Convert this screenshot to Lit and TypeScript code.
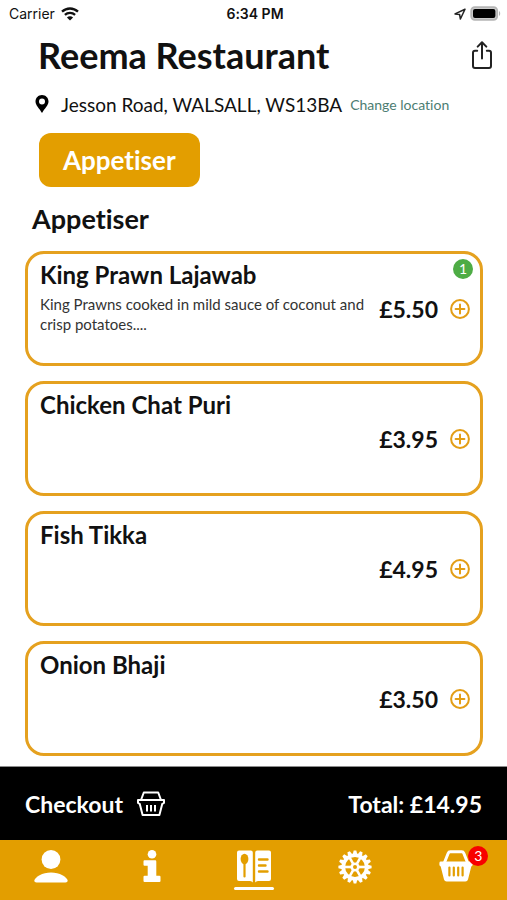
import { LitElement, html, css, svg, nothing } from "lit";
import { customElement, property } from "lit/decorators.js";

interface Dish {
  name: string;
  price: string;
  description?: string;
  count?: number;
}

const dishes: Dish[] = [
  {
    name: "King Prawn Lajawab",
    price: "£5.50",
    description: "King Prawns cooked in mild sauce of coconut and crisp potatoes....",
    count: 1,
  },
  { name: "Chicken Chat Puri", price: "£3.95" },
  { name: "Fish Tikka", price: "£4.95" },
  { name: "Onion Bhaji", price: "£3.50" },
];

const gearTeeth = Array.from({ length: 16 }, (_, i) => i * 22.5);
const gearSpokes = [30, 90, 150, 210, 270, 330];

@customElement("dish-card")
export class DishCard extends LitElement {
  @property({ attribute: false }) dish!: Dish;

  static styles = css`
    :host {
      display: block;
    }
    .card {
      position: relative;
      box-sizing: border-box;
      min-height: 115px;
      display: flex;
      align-items: center;
      border: 3px solid #e5a11f;
      border-radius: 19px;
      padding: 7px 10px 7px 12px;
      background: #fff;
    }
    .info {
      flex: 1;
      align-self: stretch;
      min-width: 0;
    }
    .name {
      margin: 0;
      font-size: 24px;
      line-height: 28px;
      font-weight: 700;
    }
    .description {
      margin: 5px 0 0;
      font-size: 15px;
      line-height: 20px;
      color: #333;
    }
    .price {
      margin: 0 12px;
      font-size: 23px;
      line-height: 28px;
      font-weight: 700;
    }
    .add {
      border: 0;
      padding: 0;
      background: none;
      width: 20px;
      height: 20px;
      cursor: pointer;
    }
    .add svg {
      display: block;
    }
    .count {
      position: absolute;
      top: 5px;
      right: 7px;
      width: 20px;
      height: 20px;
      border-radius: 50%;
      background: #4eac45;
      color: #fff;
      font-size: 14px;
      line-height: 20px;
      text-align: center;
    }
  `;

  render() {
    const { name, price, description, count } = this.dish;
    return html`
      <article class="card">
        <div class="info">
          <h3 class="name">${name}</h3>
          ${description ? html`<p class="description">${description}</p>` : nothing}
        </div>
        <span class="price">${price}</span>
        <button class="add" aria-label="Add ${name}">
          <svg width="20" height="20" viewBox="0 0 20 20" fill="none" stroke="#e39e16" stroke-width="2">
            <circle cx="10" cy="10" r="8.9" />
            <path d="M10 5.6v8.8M5.6 10h8.8" stroke-linecap="round" />
          </svg>
        </button>
        ${count ? html`<span class="count">${count}</span>` : nothing}
      </article>
    `;
  }
}

@customElement("app-root")
export class AppRoot extends LitElement {
  static styles = css`
    :host {
      display: flex;
      flex-direction: column;
      min-height: 100vh;
      background: #fff;
      color: #111;
      font-family: Lato, "Liberation Sans", sans-serif;
      font-variant-ligatures: none;
    }
    svg {
      display: block;
      flex: none;
    }
    button {
      font: inherit;
      font-variant-ligatures: none;
      color: inherit;
      border: 0;
      padding: 0;
      background: none;
      cursor: pointer;
    }
    .status {
      display: grid;
      grid-template-columns: 1fr auto 1fr;
      align-items: center;
      height: 27px;
      padding: 0 6px 0 9px;
      font-family: Inter, sans-serif;
      font-size: 14px;
    }
    .carrier,
    .power {
      display: flex;
      align-items: center;
      gap: 6px;
    }
    .power {
      justify-content: flex-end;
      gap: 4px;
    }
    .time {
      font-weight: 600;
    }
    .header {
      display: flex;
      align-items: center;
      justify-content: space-between;
      height: 56px;
      padding: 0 14px 0 38px;
    }
    .title {
      margin: 0;
      font-size: 36px;
      line-height: 40px;
      font-weight: 700;
    }
    .address {
      display: flex;
      align-items: center;
      height: 42px;
      padding: 0 35px;
      font-size: 19px;
      white-space: nowrap;
    }
    .place {
      margin: 0 8px 0 12px;
    }
    .change {
      color: #4c7d72;
      font-size: 14px;
      text-decoration: none;
    }
    .filters {
      padding: 8px 39px 0;
    }
    .filter {
      height: 54px;
      padding: 0 24px;
      border-radius: 12px;
      background: #e39e00;
      color: #fff;
      font-size: 26px;
      font-weight: 700;
    }
    .section {
      margin: 0;
      padding: 16px 32px;
      font-size: 27px;
      line-height: 32px;
      font-weight: 700;
    }
    .dishes {
      display: flex;
      flex-direction: column;
      gap: 15px;
      padding: 0 24px 10px 25px;
    }
    .bottom {
      position: sticky;
      bottom: 0;
      margin-top: auto;
    }
    .checkout {
      display: flex;
      align-items: center;
      justify-content: space-between;
      height: 73px;
      padding: 0 25px;
      border-top: 1px solid #8c8c8c;
      background: #000;
      color: #fff;
      font-size: 23px;
      font-weight: 700;
    }
    .pay {
      display: flex;
      align-items: center;
      gap: 14px;
    }
    .tabs {
      display: flex;
      height: 60px;
      background: #e39e00;
      color: #fff;
    }
    .tab {
      flex: 1;
      display: flex;
      flex-direction: column;
      align-items: center;
      padding-top: 10px;
      color: #fff;
    }
    .current::after {
      content: "";
      width: 40px;
      height: 3px;
      margin-top: 3px;
      border-radius: 2px;
      background: #fff;
    }
    .basket {
      position: relative;
    }
    .badge {
      position: absolute;
      top: -4px;
      right: -15px;
      width: 20px;
      height: 20px;
      border-radius: 50%;
      background: #f80000;
      font-size: 14px;
      line-height: 20px;
      text-align: center;
    }
  `;

  render() {
    return html`
      <div class="status">
        <span class="carrier">
          Carrier
          <svg width="18" height="14" viewBox="0 0 18 14" fill="none" stroke="#111" stroke-width="2.3">
            <path d="M1 4.7C5.6.4 12.4.4 17 4.7" />
            <path d="M3.9 7.9C6.8 5.2 11.2 5.2 14.1 7.9" />
            <path d="M9 13.6L5.9 10.5C7.6 8.9 10.4 8.9 12.1 10.5Z" fill="#111" stroke="none" />
          </svg>
        </span>
        <span class="time">6:34 PM</span>
        <span class="power">
          <svg width="12" height="12" viewBox="0 0 12 12" fill="none" stroke="#222" stroke-width="1.5" stroke-linejoin="round">
            <path d="M11 1.2L1 5.9 5.6 6.5 6.4 11Z" />
          </svg>
          <svg width="31" height="15" viewBox="0 0 31 15">
            <rect x="1.2" y="1.2" width="26" height="12.6" rx="3.6" fill="#ccc" stroke="#b5b5b5" stroke-width="1.8" />
            <rect x="3" y="3" width="22.4" height="9" rx="2" fill="#000" />
            <path d="M29 5c1.6.7 1.6 4.3 0 5Z" fill="#b5b5b5" />
          </svg>
        </span>
      </div>

      <header class="header">
        <h1 class="title">Reema Restaurant</h1>
        <button aria-label="Share">
          <svg width="22" height="28" viewBox="0 0 22 28" fill="none" stroke="#222" stroke-width="2" stroke-linecap="round" stroke-linejoin="round">
            <path d="M6.2 9.8H4Q2 9.8 2 11.8V25Q2 27 4 27H18Q20 27 20 25V11.8Q20 9.8 18 9.8H15.8" />
            <path d="M11 17.5V1.4M6.7 5.6L11 1.3 15.3 5.6" />
          </svg>
        </button>
      </header>

      <div class="address">
        <svg width="14" height="20" viewBox="0 0 14 20" fill="#000" fill-rule="evenodd">
          <path d="M7 1C3.3 1 .5 3.9.5 7.5.5 11.5 4.5 14.5 7 19 9.5 14.5 13.5 11.5 13.5 7.5 13.5 3.9 10.7 1 7 1ZM7 4.5A3 3 0 1 1 7 10.5 3 3 0 1 1 7 4.5Z" />
        </svg>
        <span class="place">Jesson Road, WALSALL, WS13BA</span>
        <a class="change" href="#location">Change location</a>
      </div>

      <div class="filters">
        <button class="filter">Appetiser</button>
      </div>

      <h2 class="section">Appetiser</h2>
      <main class="dishes">
        ${dishes.map((dish) => html`<dish-card .dish=${dish}></dish-card>`)}
      </main>

      <div class="bottom">
        <div class="checkout">
          <button class="pay">
            Checkout
            <svg width="28" height="26" viewBox="0 0 28 26" fill="none" stroke="#fff" stroke-width="2" stroke-linejoin="round">
              <path d="M4 9L6.8 1.5H21.2L24 9" />
              <path d="M1 9H27V11.8L25.3 12.8 22.4 24H5.6L2.7 12.8 1 11.8Z" />
              <path d="M10 14V20.5M14 14V20.5M18 14V20.5" />
            </svg>
          </button>
          <span>Total: £14.95</span>
        </div>
        <nav class="tabs">
          <button class="tab" aria-label="Account">
            <svg width="34" height="34" viewBox="0 0 34 34" fill="#fff">
              <circle cx="17" cy="9.5" r="9.4" />
              <path d="M2.5 32.5Q.3 32.5 .3 30.8C.8 27 8.5 22.5 17 22.5S33.2 27 33.7 30.8Q33.7 32.5 31.5 32.5Z" />
            </svg>
          </button>
          <button class="tab" aria-label="Information">
            <svg width="18" height="34" viewBox="0 0 18 34" fill="#fff">
              <circle cx="9" cy="4.3" r="4.3" />
              <path d="M1.4 10.3H12.2Q13.3 10.3 13.3 11.4V25.7H16.4Q17.5 25.7 17.5 26.8V30.9Q17.5 32 16.4 32H1.6Q.5 32 .5 30.9V26.8Q.5 25.7 1.6 25.7H4.7V15.8H1.6Q.5 15.8.5 14.7V11.4Q.5 10.3 1.4 10.3Z" />
            </svg>
          </button>
          <button class="tab current" aria-label="Menu">
            <svg width="36" height="34" viewBox="0 0 36 34">
              <path d="M3 .5H14.8Q16.8.5 16.8 2.5V32.5Q16 31 14 31H3Q1 31 1 29V2.5Q1 .5 3 .5Z" fill="#fff" />
              <path d="M21.2.5H33Q35 .5 35 2.5V29Q35 31 33 31H22Q20 31 19.2 32.5V2.5Q19.2.5 21.2.5Z" fill="#fff" />
              <ellipse cx="8.5" cy="9" rx="3.9" ry="5.2" fill="#e39e00" />
              <path d="M8.5 12.5V26.5" stroke="#e39e00" stroke-width="2.2" stroke-linecap="round" />
              <path d="M23 9.5H31.5M23 15.5H29.5M23 21.5H31.5" stroke="#e39e00" stroke-width="2.4" stroke-linecap="round" />
            </svg>
          </button>
          <button class="tab" aria-label="Settings">
            <svg width="34" height="34" viewBox="-17 -17 34 34" fill="none" stroke="#fff">
              <circle r="11.7" stroke-width="3.6" />
              <circle r="3.3" stroke-width="2.6" />
              ${gearTeeth.map((a) => svg`<path d="M-2.3 -12.8L-1.3 -16.6H1.3L2.3 -12.8Z" fill="#fff" stroke="none" transform="rotate(${a})" />`)}
              ${gearSpokes.map((a) => svg`<path d="M0 -4V-11" stroke-width="2.6" transform="rotate(${a})" />`)}
            </svg>
          </button>
          <button class="tab" aria-label="Basket">
            <span class="basket">
              <svg width="34" height="34" viewBox="0 0 34 34">
                <path d="M5.5 12.5L9.2 3.3Q9.8 1.8 11.3 1.8H22.7Q24.2 1.8 24.8 3.3L28.5 12.5" fill="none" stroke="#fff" stroke-width="3" />
                <path d="M1.8 11.5H32.2Q33.6 11.5 33.6 12.9V14.8Q33.6 15.9 32.3 16.4L29 29.5Q28.4 31.5 26.4 31.5H7.6Q5.6 31.5 5 29.5L1.7 16.4Q.4 15.9.4 14.8V12.9Q.4 11.5 1.8 11.5Z" fill="#fff" />
                <path d="M10.4 17.5V25.5M14.8 17.5V25.5M19.2 17.5V25.5M23.6 17.5V25.5" stroke="#e39e00" stroke-width="2.2" stroke-linecap="round" />
              </svg>
              <span class="badge">3</span>
            </span>
          </button>
        </nav>
      </div>
    `;
  }
}
